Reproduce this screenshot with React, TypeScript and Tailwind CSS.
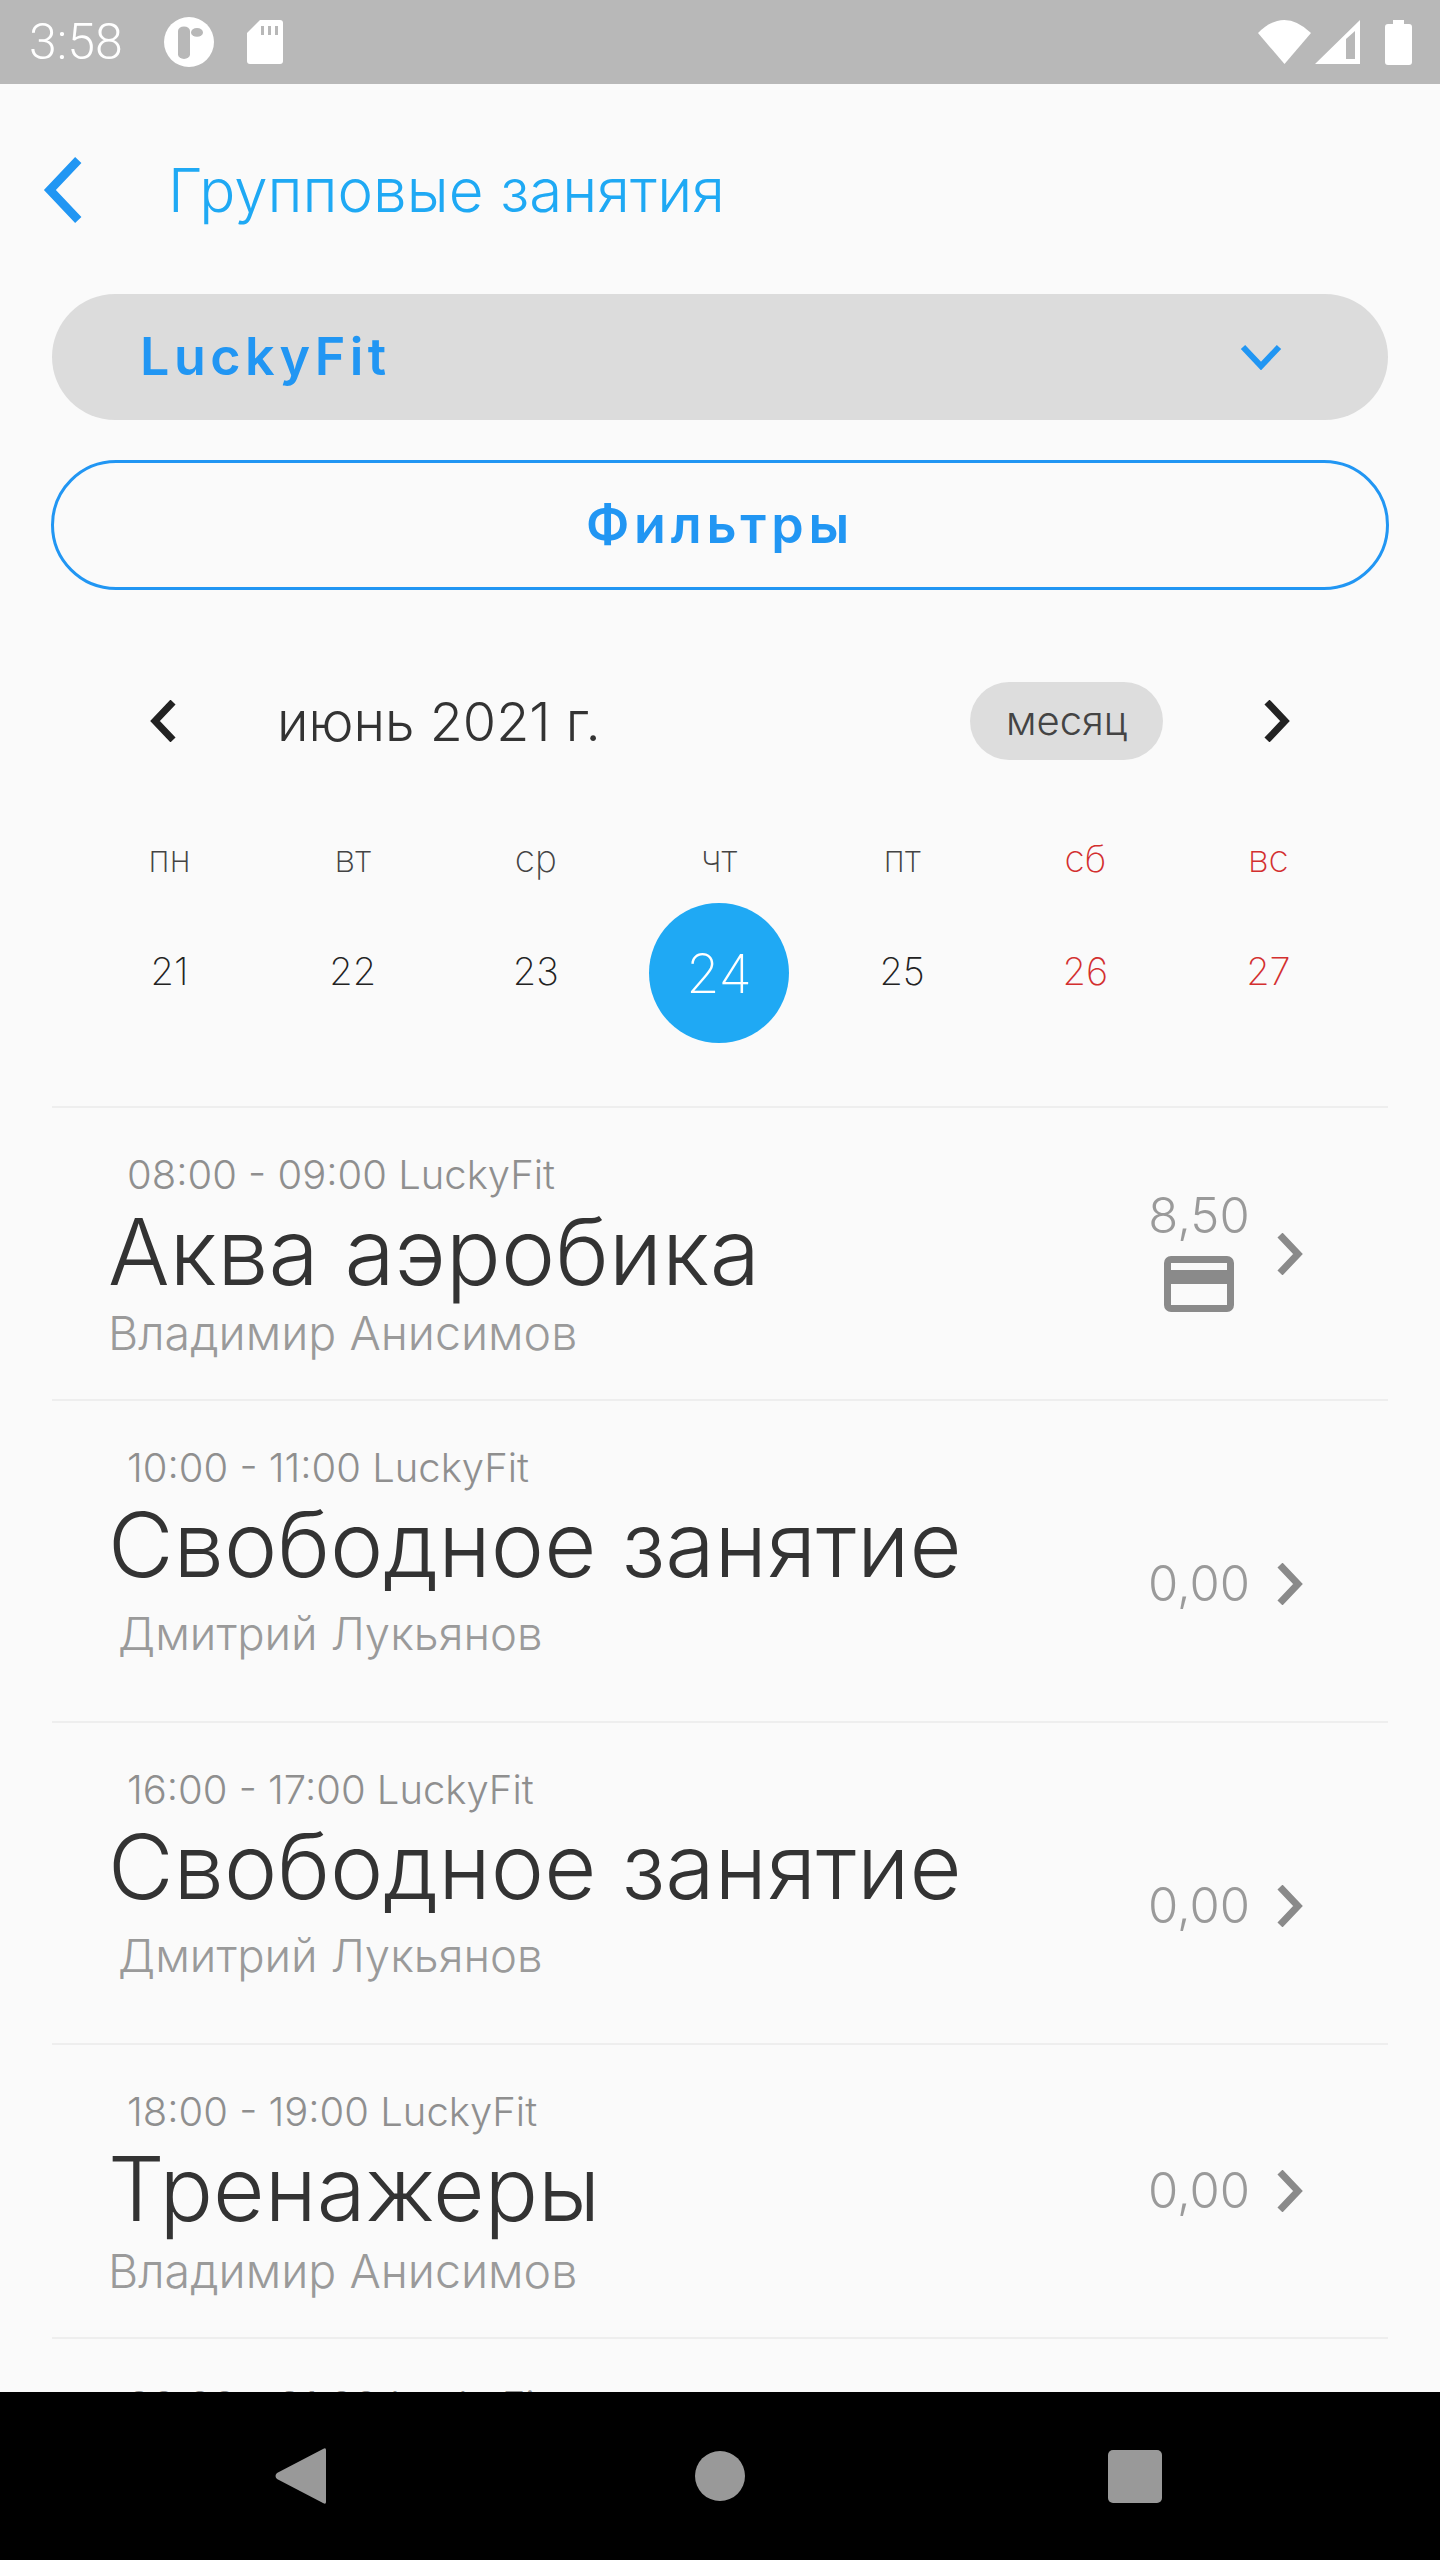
import React from "react";

const font = { fontFamily: "Inter, 'Noto Sans', sans-serif" };

const weekDays = [
  { label: "пн", date: 21 },
  { label: "вт", date: 22 },
  { label: "ср", date: 23 },
  { label: "чт", date: 24, active: true },
  { label: "пт", date: 25 },
  { label: "сб", date: 26, weekend: true },
  { label: "вс", date: 27, weekend: true },
];

const lessons = [
  { time: "08:00 - 09:00 LuckyFit", title: "Аква аэробика", coach: "Владимир Анисимов", price: "8,50", card: true, rowClass: "h-[293px]", titleClass: "text-[91.5px]", coachClass: "mt-[2px] text-[46.5px]", rightClass: "" },
  { time: "10:00 - 11:00 LuckyFit", title: "Свободное занятие", coach: "Дмитрий Лукьянов", price: "0,00", rowClass: "h-[322px]", titleClass: "text-[90px]", coachClass: "mt-[10px] ml-[10px] text-[45.5px]", rightClass: "mt-[46px]" },
  { time: "16:00 - 17:00 LuckyFit", title: "Свободное занятие", coach: "Дмитрий Лукьянов", price: "0,00", rowClass: "h-[322px]", titleClass: "text-[90px]", coachClass: "mt-[10px] ml-[10px] text-[45.5px]", rightClass: "mt-[46px]" },
  { time: "18:00 - 19:00 LuckyFit", title: "Тренажеры", coach: "Владимир Анисимов", price: "0,00", rowClass: "h-[294px]", titleClass: "text-[89px]", coachClass: "mt-[3px] text-[46.5px]", rightClass: "" },
];

function Chevron({ dir, className, weight = 7 }: { dir: "left" | "right"; className: string; weight?: number }) {
  return (
    <svg viewBox="0 0 26 42" className={className} fill="none" stroke="currentColor" strokeWidth={weight} strokeLinecap="butt" strokeLinejoin="miter">
      <path d={dir === "left" ? "M23 2 L5 21 L23 40" : "M3 2 L21 21 L3 40"} />
    </svg>
  );
}

function StatusBar() {
  return (
    <div className="h-[84px] shrink-0 bg-[#b8b8b8] flex items-center text-white pl-[29px] pr-[28px]">
      <span className="text-[50px] leading-none font-light" style={{ fontFamily: "Roboto, sans-serif" }}>3:58</span>
      <svg viewBox="0 0 50 68" className="ml-[41px] w-[50px] h-[50px]" preserveAspectRatio="none">
        <ellipse cx="25" cy="34" rx="25" ry="34" fill="#fff" />
        <rect x="14" y="13" width="12" height="44" rx="6" fill="#b8b8b8" />
        <circle cx="33" cy="21" r="6" fill="#b8b8b8" />
      </svg>
      <svg viewBox="0 0 36 44" className="ml-[33px] w-[36px] h-[44px]">
        <path d="M13 0 H33 a3 3 0 0 1 3 3 V41 a3 3 0 0 1 -3 3 H3 a3 3 0 0 1 -3 -3 V13 Z" fill="#fff" />
        <path d="M14 6 h3 v9 h-3z M21 6 h3 v9 h-3z M28 6 h3 v9 h-3z" fill="#b8b8b8" />
      </svg>
      <div className="ml-auto flex items-center">
        <svg viewBox="0 0 53 44" className="w-[53px] h-[44px]">
          <path d="M0 13 Q26 -13 53 13 L26.5 44 Z" fill="#fff" />
        </svg>
        <svg viewBox="0 0 45 44" className="ml-[4px] w-[45px] h-[44px]">
          <path fillRule="evenodd" d="M45 0 V44 H0 Z M31 13 L31 39 H40 V11 L31 19 Z" fill="#fff" />
        </svg>
        <svg viewBox="0 0 27 45" className="ml-[25px] w-[27px] h-[45px]">
          <path d="M8 0 H19 V4 H24 a3 3 0 0 1 3 3 V42 a3 3 0 0 1 -3 3 H3 a3 3 0 0 1 -3 -3 V7 a3 3 0 0 1 3 -3 H8 Z" fill="#fff" />
        </svg>
      </div>
    </div>
  );
}

function CalendarWeek() {
  return (
    <div className="mt-[79px] pl-[78px] pr-[80px] grid grid-cols-7">
      {weekDays.map((d) => (
        <div key={d.label} className="flex flex-col items-center">
          <span className={`h-[40px] leading-[40px] text-[37px] font-extralight ${d.weekend ? "text-[#d32f2f]" : "text-[#444444]"}`}>{d.label}</span>
          <div className={`mt-[24px] w-[140px] h-[140px] rounded-full flex items-center justify-center ${d.active ? "bg-[#1fa9f4] text-white text-[54px] font-extralight" : d.weekend ? "pb-[4px] text-[#d32f2f] text-[38px] font-extralight" : "pb-[4px] text-[#222222] text-[38px] font-extralight"}`}>
            {d.date}
          </div>
        </div>
      ))}
    </div>
  );
}

function LessonRow({ lesson }: { lesson: (typeof lessons)[number] }) {
  return (
    <div className={`${lesson.rowClass} border-t-2 border-[#eeeeee] flex items-center pl-[56px] pr-[85px]`}>
      <div className="flex-1 min-w-0 self-start pt-[42px]">
        <div className="ml-[19px] text-[40px] leading-[50px] font-light text-[#8f8f8f]">{lesson.time}</div>
        <div className={`${lesson.titleClass} leading-[104px] font-light text-[#333333]`}>{lesson.title}</div>
        <div className={`${lesson.coachClass} leading-[54px] font-light text-[#9a9a9a]`}>{lesson.coach}</div>
      </div>
      <div className={`${lesson.rightClass} w-[104px] flex flex-col items-center`}>
        <span className="text-[49px] leading-[56px] font-light text-[#9a9a9a]">{lesson.price}</span>
        {lesson.card && (
          <svg viewBox="0 0 70 56" className="mt-[12px] mb-[8px] w-[70px] h-[56px]">
            <path fillRule="evenodd" d="M7 0 H63 a7 7 0 0 1 7 7 V49 a7 7 0 0 1 -7 7 H7 a7 7 0 0 1 -7 -7 V7 a7 7 0 0 1 7 -7 Z M7 7 V14 H63 V7 Z M7 28 V49 H63 V28 Z" fill="#8a8a8a" />
          </svg>
        )}
      </div>
      <Chevron dir="right" className={`${lesson.rightClass} ml-[26px] w-[26px] h-[42px] text-[#8a8a8a]`} />
    </div>
  );
}

export default function App() {
  return (
    <div className="w-[1440px] h-[2560px] flex flex-col overflow-hidden bg-[#fafafa]" style={font}>
      <StatusBar />

      <main className="flex-1 min-h-0 overflow-hidden">
        <header className="h-[124px] mt-[44px] flex items-center pl-[42px]">
          <Chevron dir="left" weight={5.5} className="w-[41px] h-[68px] text-[#2196f3]" />
          <h1 className="ml-[85px] text-[60px] font-light text-[#1fa9f4]">Групповые занятия</h1>
        </header>

        <div className="mx-[52px] mt-[42px] h-[126px] rounded-full bg-[#dcdcdc] flex items-center justify-between pl-[88px] pr-[106px]">
          <span className="text-[52px] font-semibold tracking-[4.5px] text-[#2196f3]">LuckyFit</span>
          <svg viewBox="0 0 42 26" className="w-[42px] h-[26px]" fill="none" stroke="#2196f3" strokeWidth="6">
            <path d="M3 3 L21 22 L39 3" />
          </svg>
        </div>

        <button className="block mx-[51px] mt-[40px] w-[1338px] h-[130px] rounded-full border-[3px] border-[#2196f3] text-[52px] font-semibold tracking-[4.8px] text-[#2196f3]">
          Фильтры
        </button>

        <div className="mt-[92px] h-[78px] flex items-center pl-[150px] pr-[150px]">
          <Chevron dir="left" className="w-[26px] h-[42px] text-[#222222]" />
          <span className="ml-[101px] text-[54px] font-light text-[#333333]">июнь 2021 г.</span>
          <span className="ml-auto w-[193px] h-[78px] rounded-full bg-[#dddddd] flex items-center justify-center text-[40px] font-light text-[#444444]">месяц</span>
          <Chevron dir="right" className="ml-[101px] w-[26px] h-[42px] text-[#222222]" />
        </div>

        <CalendarWeek />

        <div className="mx-[52px] mt-[63px]">
          {lessons.map((l) => (
            <LessonRow key={l.time} lesson={l} />
          ))}
          <div className="border-t-2 border-[#eeeeee] pt-[42px] pl-[75px] text-[40px] leading-[50px] font-light text-[#8f8f8f]">
            20:00 - 21:00 LuckyFit
          </div>
        </div>
      </main>

      <nav className="h-[168px] shrink-0 bg-black flex items-center pl-[275px]">
        <svg viewBox="0 0 51 56" className="w-[51px] h-[56px]">
          <path d="M51 2 V54 Q51 57 48 55 L2 31 Q-1 28 2 25 L48 1 Q51 -1 51 2 Z" fill="#999999" />
        </svg>
        <div className="ml-[369px] w-[50px] h-[50px] rounded-full bg-[#999999]" />
        <div className="ml-[363px] w-[54px] h-[53px] rounded-[5px] bg-[#999999]" />
      </nav>
    </div>
  );
}
